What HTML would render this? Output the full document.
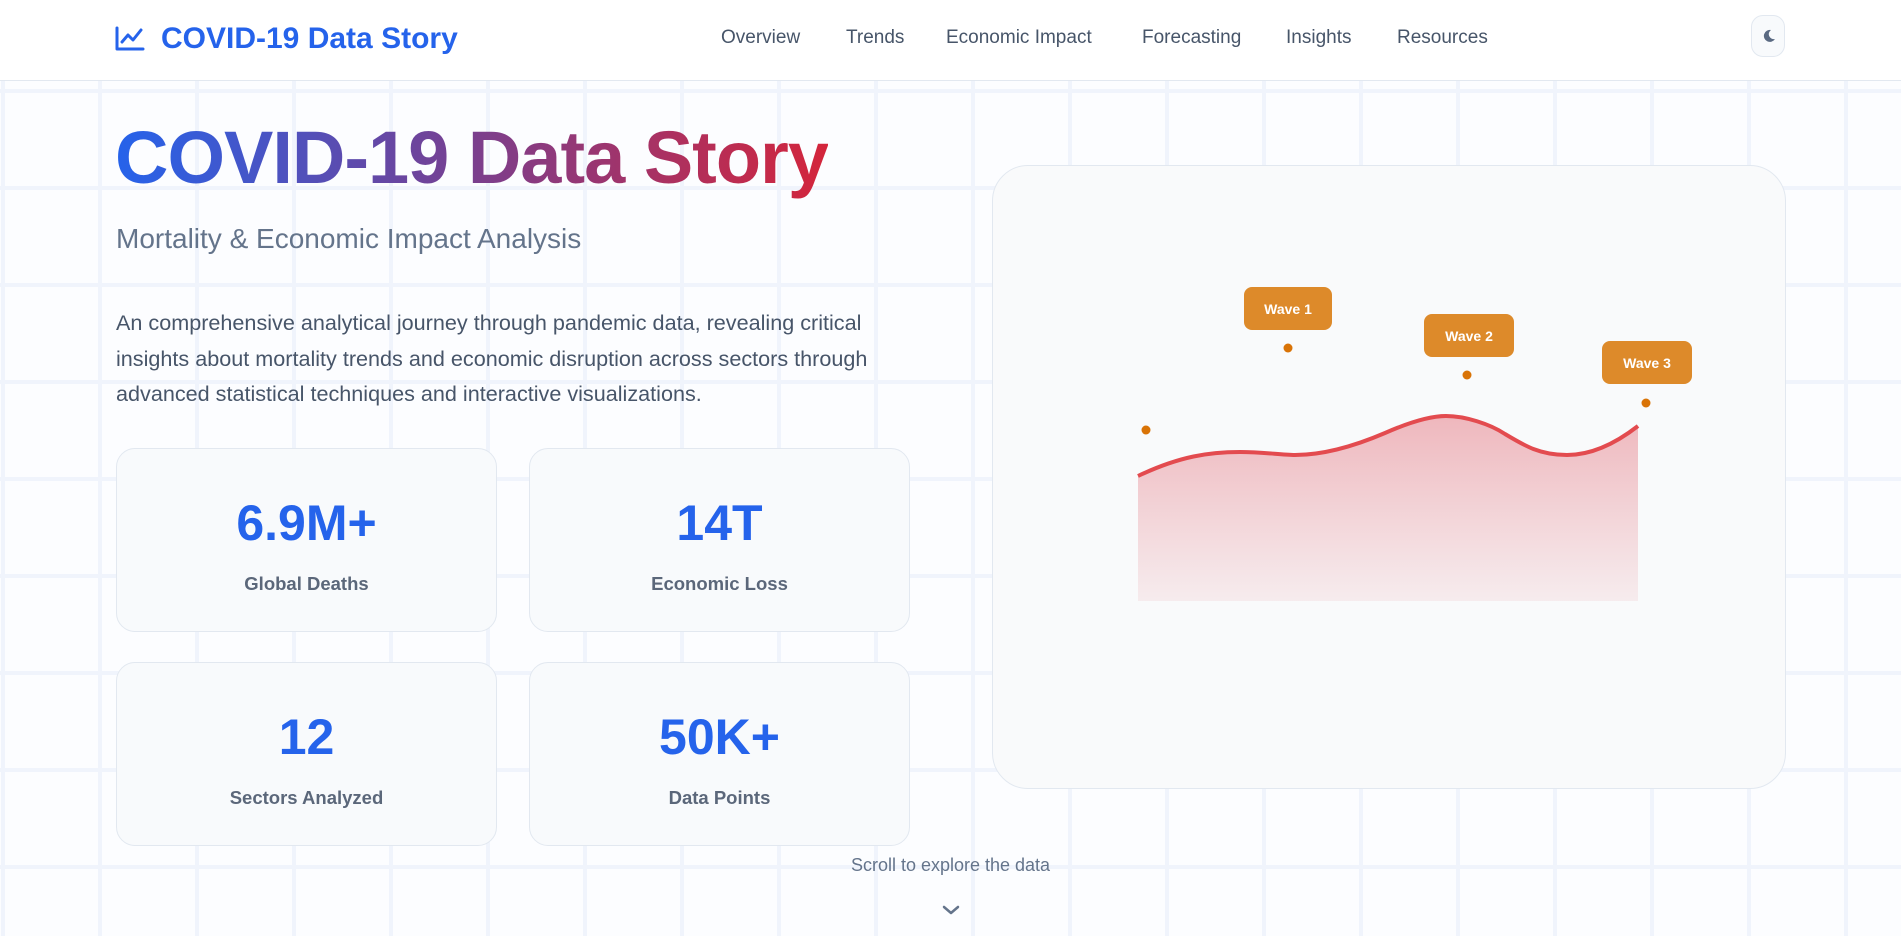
<!DOCTYPE html>
<html><head><meta charset="utf-8"><style>
*{margin:0;padding:0;box-sizing:border-box}
body{width:1901px;height:936px;overflow:hidden;font-family:"Liberation Sans",sans-serif;background:#fcfcfe;position:relative}
.grid{position:absolute;left:0;top:80px;width:1901px;height:856px;
background-color:#fcfdff;
background-image:linear-gradient(to right,#f0f4fc 0,#f0f4fc 4px,transparent 4px),linear-gradient(to bottom,#f0f4fc 0,#f0f4fc 4px,transparent 4px);
background-size:97px 97px;background-position:1px 9px}
nav{position:absolute;left:0;top:0;width:1901px;height:81px;background:#fff;border-bottom:1px solid #e2e8f0}
.logo{position:absolute;left:115px;top:22px;display:flex;align-items:center;color:#2563eb;font-weight:bold;font-size:30px}
.logo svg{margin-right:16px}
.links a{position:absolute;top:27px;font-size:19px;color:#475569;text-decoration:none}
.btn{position:absolute;left:1751px;top:15px;width:34px;height:42px;border:1px solid #e2e8f0;border-radius:12px;background:#f8fafc}
h1{position:absolute;left:115px;top:115px;font-size:74px;font-weight:bold;letter-spacing:-1px;white-space:nowrap;
background:linear-gradient(90deg,#2563eb,#7a3f8e 50%,#d4253b);-webkit-background-clip:text;background-clip:text;color:transparent}
.sub{position:absolute;left:116px;top:223px;font-size:28px;font-weight:300;color:#64748b}
.para{position:absolute;left:116px;top:305px;width:800px;font-size:21.6px;line-height:35.5px;color:#475569}
.card{position:absolute;width:381px;height:184px;background:#f8fafc;border:1px solid #e2e8f0;border-radius:19px;text-align:center}
.card .n{position:absolute;top:45px;width:100%;font-size:50px;font-weight:bold;color:#2563eb}
.card .l{position:absolute;top:124px;width:100%;font-size:18.5px;color:#5b677a;font-weight:bold}
.chart{position:absolute;left:992px;top:165px;width:794px;height:624px;background:#f9fafb;border:1px solid #e2e8f0;border-radius:36px}
.wave{position:absolute;background:#dd8a2a;color:#fff;font-weight:bold;font-size:14px;border-radius:8px;display:flex;align-items:center;justify-content:center}
.scroll{position:absolute;left:0;width:1901px;top:855px;text-align:center;font-size:18px;color:#64748b}
</style></head><body>
<div class="grid"></div>
<nav>
<div class="logo"><svg width="30" height="26" viewBox="0 0 30 26" fill="none" stroke="#2563eb" stroke-width="3" stroke-linecap="round" stroke-linejoin="round"><path d="M2 2v21h26"/><path d="M7 16l6-7 5 5 8-10"/></svg>COVID-19 Data Story</div>
<div class="links"><a style="left:721px">Overview</a><a style="left:846px">Trends</a><a style="left:946px">Economic Impact</a><a style="left:1142px">Forecasting</a><a style="left:1286px">Insights</a><a style="left:1397px">Resources</a></div>
<div class="btn"><svg style="position:absolute;left:10px;top:13px" width="14" height="14" viewBox="0 0 14 14"><path d="M9 1A6 6 0 1 0 13 10 5 5 0 0 1 9 1z" fill="#5a6a82"/></svg></div>
</nav>
<h1>COVID-19 Data Story</h1>
<div class="sub">Mortality &amp; Economic Impact Analysis</div>
<div class="para">An comprehensive analytical journey through pandemic data, revealing critical insights about mortality trends and economic disruption across sectors through advanced statistical techniques and interactive visualizations.</div>
<div class="card" style="left:116px;top:448px"><div class="n">6.9M+</div><div class="l">Global Deaths</div></div>
<div class="card" style="left:529px;top:448px"><div class="n">14T</div><div class="l">Economic Loss</div></div>
<div class="card" style="left:116px;top:662px"><div class="n">12</div><div class="l">Sectors Analyzed</div></div>
<div class="card" style="left:529px;top:662px"><div class="n">50K+</div><div class="l">Data Points</div></div>
<div class="chart"></div>
<svg style="position:absolute;left:0;top:0" width="1901" height="936">
<defs><linearGradient id="g" x1="0" y1="0" x2="0" y2="1"><stop offset="0" stop-color="#e6808a" stop-opacity=".55"/><stop offset="1" stop-color="#f3dde0" stop-opacity=".5"/></linearGradient></defs>
<path d="M1138 476 C1180 456,1210 452,1240 452 C1265 452,1280 455,1295 455 C1320 455,1350 448,1385 433 C1410 422,1430 416,1446 416 C1465 416,1490 424,1505 434 C1525 446,1540 455,1567 455 C1595 455,1620 440,1638 426 L1638 601 L1138 601Z" fill="url(#g)"/>
<path d="M1138 476 C1180 456,1210 452,1240 452 C1265 452,1280 455,1295 455 C1320 455,1350 448,1385 433 C1410 422,1430 416,1446 416 C1465 416,1490 424,1505 434 C1525 446,1540 455,1567 455 C1595 455,1620 440,1638 426" fill="none" stroke="#e34b4f" stroke-width="4"/>
<g fill="#d97306"><circle cx="1146" cy="430" r="4.5"/><circle cx="1288" cy="348" r="4.5"/><circle cx="1467" cy="375" r="4.5"/><circle cx="1646" cy="403" r="4.5"/></g>
</svg>
<div class="wave" style="left:1244px;top:287px;width:88px;height:43px">Wave 1</div>
<div class="wave" style="left:1424px;top:314px;width:90px;height:43px">Wave 2</div>
<div class="wave" style="left:1602px;top:341px;width:90px;height:43px">Wave 3</div>
<div class="scroll">Scroll to explore the data</div>
<svg style="position:absolute;left:941px;top:904px" width="20" height="12" viewBox="0 0 20 12"><path d="M3 3l7 6 7-6" fill="none" stroke="#64748b" stroke-width="2.5" stroke-linecap="round" stroke-linejoin="round"/></svg>
</body></html>
